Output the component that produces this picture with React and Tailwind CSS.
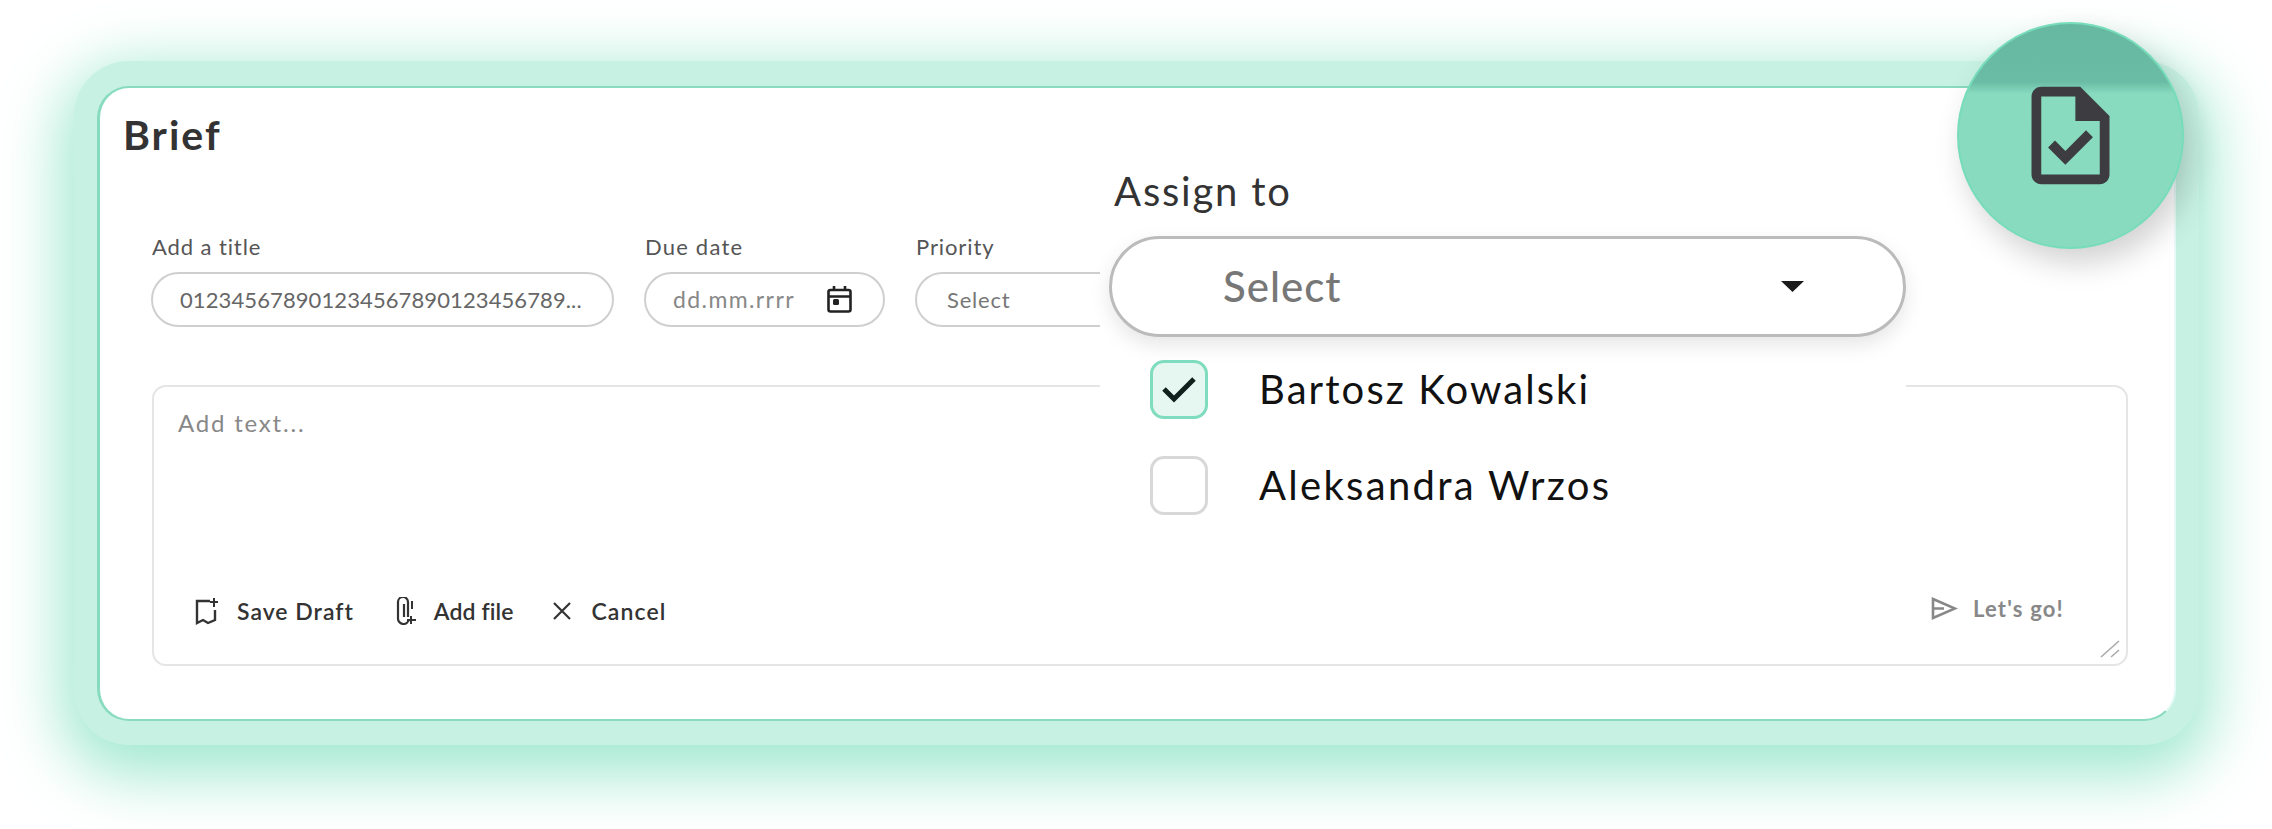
const f = { fontFamily: 'Lato, "Noto Sans", sans-serif' };

function Field({ label, className, children, track }) {
  return (
    <div className={className}>
      <div className={"pl-[1px] text-[22px] leading-[26px] text-[#555] " + track}>{label}</div>
      <div className="mt-[12px] h-[55px] rounded-full border-2 border-[#cfcfcf] flex items-center">{children}</div>
    </div>
  );
}

function Tool({ icon, label, className, textClass }) {
  return (
    <div className={"flex items-center " + className}>
      {icon}
      <span className={"text-[23px] font-semibold text-[#333] " + textClass}>{label}</span>
    </div>
  );
}

export default function App() {
  return (
    <div className="relative h-[829px] w-full overflow-hidden bg-white pl-[74px] pt-[61px]" style={f}>
      <div className="h-[684px] w-[2125px] rounded-[55px] bg-[#c7f2e3] pl-[23px] pt-[25px] shadow-[0_18px_62px_12px_#a0e8d0]">
        <div className="h-[635px] w-[2079px] rounded-[32px] border-y-[2px] border-l-[3px] border-r-[2px] border-y-[#88dbbf] border-l-[#88dbbf] border-r-[#e6fbf7] bg-white pl-[23px] pt-[22px]">
          <h1 className="text-[41px] font-bold leading-[50px] text-[#333] tracking-[2px]">Brief</h1>

          <div className="ml-[28px] mt-[74px] flex gap-[30px]">
            <Field label="Add a title" track="tracking-[0.9px]" className="w-[463px]">
              <span className="pl-[27px] text-[22px] text-[#666] tracking-[0.1px]">012345678901234567890123456789...</span>
            </Field>
            <Field label="Due date" track="tracking-[1.2px]" className="w-[241px]">
              <span className="flex-1 pl-[27px] text-[23px] text-[#888] tracking-[1.4px]">dd.mm.rrrr</span>
              <svg className="mr-[31px] h-[27px] w-[25px]" viewBox="0 0 25 27" fill="none" stroke="#222" strokeWidth="2.6">
                <rect x="1.500" y="4" width="22" height="21.500" rx="2" />
                <path d="M1.500 10.500h22M7 0v4M18 0v4" />
                <rect x="6" y="13" width="6" height="6" rx="1.500" fill="#222" stroke="none" />
              </svg>
            </Field>
            <Field label="Priority" track="tracking-[0.9px]" className="w-[400px]">
              <span className="pl-[30px] text-[22px] text-[#777] tracking-[0.8px]">Select</span>
            </Field>
          </div>

          <div className="relative ml-[29px] mt-[58px] h-[281px] w-[1976px] rounded-[14px] border-2 border-[#e5e5e5] bg-white px-[24px] pt-[21px]">
            <div className="text-[24px] leading-[30px] text-[#888] tracking-[1.8px]">Add text...</div>
            <div className="mt-[156px] flex items-center">
              <Tool
                className="ml-[17px] gap-[16px]"
                label="Save Draft"
                textClass="tracking-[1px]"
                icon={
                  <svg className="h-[28px] w-[26px]" viewBox="0 0 26 28" fill="none" stroke="#333" strokeWidth="2.4">
                    <path d="M15 4H2v22l6-3 5 3 7-3V13" />
                    <path d="M19 1v9M15 5h8" strokeWidth="2" />
                  </svg>
                }
              />
              <Tool
                className="ml-[41px] gap-[17px]"
                label="Add file"
                textClass="tracking-[0.1px]"
                icon={
                  <svg className="h-[28px] w-[22px]" viewBox="0 0 22 28" fill="none" stroke="#333" strokeWidth="2.2">
                    <path d="M9 7v13M13 20V5a5 5 0 0 0-10 0v16a5.500 5.500 0 0 0 11 1" />
                    <path d="M17 4v8M16 19v8M12 23h9" strokeWidth="2" />
                  </svg>
                }
              />
              <Tool
                className="ml-[39px] gap-[19px]"
                label="Cancel"
                textClass="tracking-[1.1px]"
                icon={
                  <svg className="h-[20px] w-[20px]" viewBox="0 0 20 20" fill="none" stroke="#333" strokeWidth="2.2">
                    <path d="M2 2l16 16M18 2L2 18" />
                  </svg>
                }
              />
            </div>
            <div className="absolute right-[62px] top-[205px] flex items-center gap-[15px]">
              <svg className="h-[25px] w-[27px]" viewBox="0 0 27 25" fill="none" stroke="#888" strokeWidth="2.6">
                <path d="M2 3l22 9.500L2 22zM2 12.500h11" />
              </svg>
              <span className="text-[22px] font-bold text-[#888] tracking-[1.200px]">Let's go!</span>
            </div>
            <svg className="absolute bottom-[6px] right-[6px] h-[18px] w-[20px]" viewBox="0 0 20 18" fill="none" stroke="#aaa" strokeWidth="1.6">
              <path d="M1 17L19 1M11 17l8-7" />
            </svg>
          </div>
        </div>
      </div>

      <div className="absolute left-[1100px] top-[160px] h-[380px] w-[806px] bg-white pt-[6px]">
        <div className="ml-[14px] text-[40px] leading-[50px] text-[#333] tracking-[1.8px]">Assign to</div>
        <div className="absolute left-[9px] top-[76px] flex h-[101px] w-[797px] items-center justify-between rounded-full border-[3px] border-[#bbb] bg-white pl-[111px] pr-[99px] shadow-[0_8px_20px_rgba(0,0,0,0.1)]">
          <span className="text-[42px] font-medium text-[#777] tracking-[1px]">Select</span>
          <svg className="h-[11px] w-[23px]" viewBox="0 0 23 11" fill="#1a1a1a"><path d="M0 0h23L11.500 11z" /></svg>
        </div>
        <div className="absolute left-[50px] top-[199px] flex flex-col gap-[36px]">
          <div className="flex items-center gap-[51px]">
            <div className="flex h-[59px] w-[58px] items-center justify-center rounded-[14px] border-[3px] border-[#7fdcbe] bg-[#e6f6f0]">
              <svg className="h-[28px] w-[36px]" viewBox="0 0 36 28" fill="none" stroke="#10201c" strokeWidth="5"><path d="M3 14l10 10L33 4" /></svg>
            </div>
            <span className="text-[40px] text-[#111] tracking-[2.1px]">Bartosz Kowalski</span>
          </div>
          <div className="flex items-center gap-[51px]">
            <div className="h-[59px] w-[58px] rounded-[14px] border-[3px] border-[#d8d8d8] bg-white" />
            <span className="text-[40px] text-[#111] tracking-[2.3px]">Aleksandra Wrzos</span>
          </div>
        </div>
      </div>

      <div className="absolute left-[1957px] top-[22px] flex h-[227px] w-[227px] items-center justify-center rounded-full bg-[#76dcba] shadow-[8px_14px_30px_rgba(0,0,0,0.18)]">
        <div className="absolute inset-[2px] rounded-full bg-[linear-gradient(to_bottom,#66b8a0_0,#6abda4_58px,#88dbbf_70px)]" />
        <svg className="relative h-[117px] w-[117px]" viewBox="0 0 24 24" fill="#3c3c41">
          <path d="M14 2H6c-1.100 0-1.990.9-1.990 2L4 20c0 1.100.89 2 1.990 2H18c1.100 0 2-.9 2-2V8l-6-6zm4 18H6V4h7v5h5v11zm-9.180-6.950L7.400 14.460 10.940 18l5.660-5.660-1.410-1.410-4.240 4.240-2.130-2.120z" />
        </svg>
      </div>
    </div>
  );
}
